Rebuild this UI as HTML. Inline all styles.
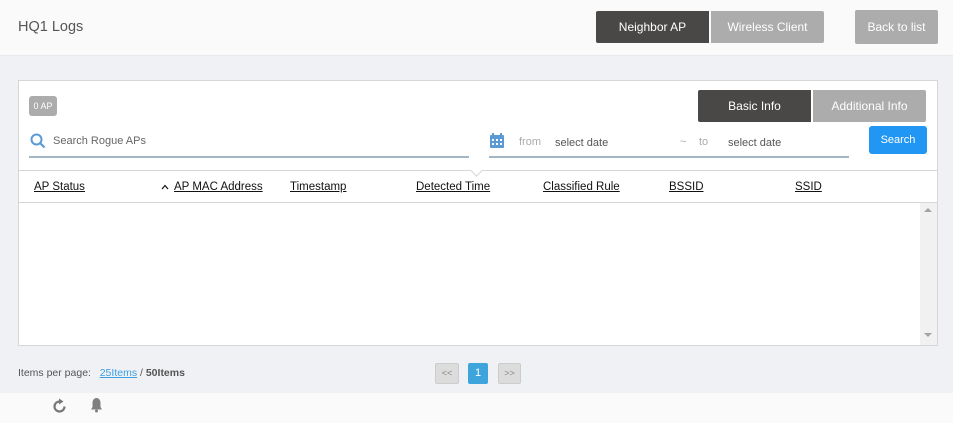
<!DOCTYPE html>
<html><head><meta charset="utf-8"><style>
*{margin:0;padding:0;box-sizing:border-box}
body{width:953px;height:423px;background:#f0f1f5;font-family:"Liberation Sans",sans-serif;position:relative;overflow:hidden;color:#333}
.a{position:absolute}
.btn{position:absolute;color:#fff;font-size:12px;text-align:center;border-radius:2px}
.th{position:absolute;top:181px;font-size:11.5px;color:#111;text-decoration:underline}
</style></head><body>
<div class="a" style="left:0;top:0;width:953px;height:56px;background:#fafafa;border-bottom:1px solid #e8e9ee"></div>
<div class="a" style="left:18px;top:19px;font-size:14.5px;color:#555">HQ1 Logs</div>
<div class="btn" style="left:596px;top:11px;width:113px;height:32px;line-height:32px;background:#4a4846;border-radius:2px 0 0 2px">Neighbor AP</div>
<div class="btn" style="left:711px;top:11px;width:113px;height:32px;line-height:32px;background:#acacac;border-radius:0 2px 2px 0">Wireless Client</div>
<div class="btn" style="left:855px;top:10px;width:83px;height:34px;line-height:34px;background:#acacac">Back to list</div>

<div class="a" style="left:18px;top:80px;width:920px;height:266px;background:#fff;border:1px solid #d6d6d6"></div>
<div class="a" style="left:29px;top:96px;width:28px;height:20px;background:#acacac;border-radius:3px;color:#fff;font-size:9px;line-height:20px;text-align:center">0 AP</div>
<div class="btn" style="left:698px;top:90px;width:113px;height:32px;line-height:32px;background:#4a4846;border-radius:2px 0 0 2px">Basic Info</div>
<div class="btn" style="left:813px;top:90px;width:113px;height:32px;line-height:32px;background:#acacac;border-radius:0 2px 2px 0">Additional Info</div>
<svg class="a" style="left:30px;top:133px" width="16" height="16" viewBox="0 0 16 16"><circle cx="6.5" cy="6.5" r="5" fill="none" stroke="#5b9bd5" stroke-width="2"/><line x1="10" y1="10" x2="14.5" y2="14.5" stroke="#5b9bd5" stroke-width="2.2"/></svg>
<div class="a" style="left:53px;top:135px;font-size:11px;color:#666">Search Rogue APs</div>
<div class="a" style="left:29px;top:156px;width:440px;height:2px;background:#a3b6c6"></div>
<svg class="a" style="left:490px;top:133px" width="14" height="15" viewBox="0 0 14 15"><rect x="0" y="2" width="14" height="13" rx="1" fill="#5b9bd5"/><rect x="2" y="0" width="2" height="4" fill="#5b9bd5"/><rect x="10" y="0" width="2" height="4" fill="#5b9bd5"/><g fill="#fff"><rect x="2" y="6" width="2" height="2"/><rect x="6" y="6" width="2" height="2"/><rect x="10" y="6" width="2" height="2"/><rect x="2" y="10" width="2" height="2"/><rect x="6" y="10" width="2" height="2"/><rect x="10" y="10" width="2" height="2"/></g></svg>
<div class="a" style="left:519px;top:136px;font-size:11px;color:#aaa">from</div>
<div class="a" style="left:555px;top:137px;font-size:11px;color:#555">select date</div>
<div class="a" style="left:680px;top:136px;font-size:11px;color:#aaa">~</div>
<div class="a" style="left:699px;top:136px;font-size:11px;color:#aaa">to</div>
<div class="a" style="left:728px;top:137px;font-size:11px;color:#555">select date</div>
<div class="a" style="left:489px;top:156px;width:360px;height:2px;background:#a3b6c6"></div>
<div class="btn" style="left:869px;top:126px;width:58px;height:28px;line-height:28px;background:#2196f3;font-size:11px;border-radius:3px">Search</div>

<div class="a" style="left:19px;top:170px;width:918px;height:1px;background:#d6d6d6"></div>
<div class="a" style="left:19px;top:202px;width:918px;height:1px;background:#d6d6d6"></div>
<div class="a" style="left:472px;top:166px;width:9px;height:9px;background:#fff;border-right:1px solid #d6d6d6;border-bottom:1px solid #d6d6d6;transform:rotate(45deg)"></div>
<div class="th" style="left:34px">AP Status</div>
<svg class="a" style="left:161px;top:184px" width="8" height="6" viewBox="0 0 8 6"><path d="M1 5L4 1.5L7 5" fill="none" stroke="#111" stroke-width="1.2"/></svg>
<div class="th" style="left:174px">AP MAC Address</div>
<div class="th" style="left:290px">Timestamp</div>
<div class="th" style="left:416px">Detected Time</div>
<div class="th" style="left:543px">Classified Rule</div>
<div class="th" style="left:669px">BSSID</div>
<div class="th" style="left:795px">SSID</div>
<div class="a" style="left:920px;top:203px;width:17px;height:142px;background:#f1f1f1"></div>
<div class="a" style="left:924px;top:208px;width:0;height:0;border-left:4px solid transparent;border-right:4px solid transparent;border-bottom:4px solid #a3a3a3"></div>
<div class="a" style="left:924px;top:333px;width:0;height:0;border-left:4px solid transparent;border-right:4px solid transparent;border-top:4px solid #a3a3a3"></div>

<div class="a" style="left:18px;top:367px;font-size:10.5px;color:#555">Items per page:&nbsp;&nbsp; <span style="color:#3aa0e0;text-decoration:underline">25Items</span> / <b>50Items</b></div>
<div class="a" style="left:435px;top:363px;width:24px;height:21px;background:#dcdcdc;border:1px solid #ccc;border-radius:2px;font-size:9px;color:#888;text-align:center;line-height:19px">&lt;&lt;</div>
<div class="a" style="left:468px;top:363px;width:20px;height:21px;background:#3da4dc;border-radius:2px;font-size:11px;color:#fff;text-align:center;line-height:21px">1</div>
<div class="a" style="left:498px;top:363px;width:23px;height:21px;background:#dcdcdc;border:1px solid #ccc;border-radius:2px;font-size:9px;color:#888;text-align:center;line-height:19px">&gt;&gt;</div>

<div class="a" style="left:0;top:393px;width:953px;height:30px;background:#fafafa"></div>
<svg class="a" style="left:52px;top:398px" width="16" height="16" viewBox="0 0 16 16"><path d="M12.5 8.5A5 5 0 1 1 8 3.5" fill="none" stroke="#777" stroke-width="2.2"/><path d="M7 0.5L11.5 3.5L7 6.5Z" fill="#777"/></svg>
<svg class="a" style="left:89px;top:397px" width="15" height="16" viewBox="0 0 15 16"><path d="M7.5 1C4.5 1 3.5 4 3.5 6V10L2 12.5H13L11.5 10V6C11.5 4 10.5 1 7.5 1Z" fill="#808080"/><circle cx="7.5" cy="14" r="1.5" fill="#808080"/></svg>
</body></html>
